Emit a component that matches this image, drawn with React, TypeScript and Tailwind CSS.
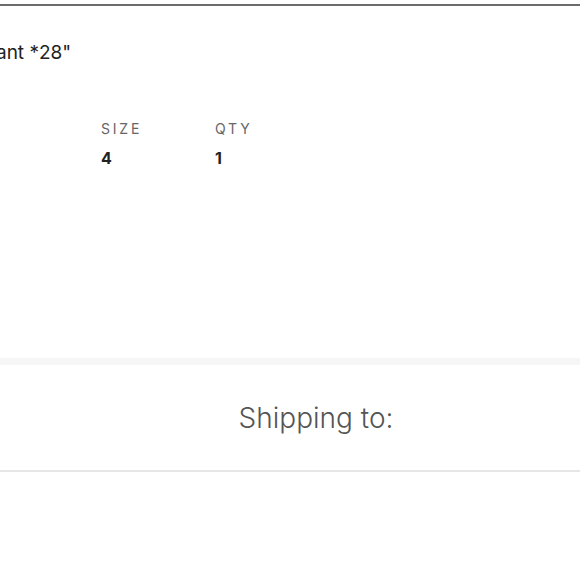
export default function App() {
  return (
    <div className="w-[580px] h-[580px] overflow-hidden bg-white font-['Inter',sans-serif]">
      <div className="h-[4px]" />
      <div className="border-t-2 border-[#6b6b6b]" />
      <div className="h-[352px] flex flex-col">
        <div className="pt-[34px] text-[19px] leading-[25px] text-[#222] whitespace-nowrap -ml-[50px]">
          Pendant *28"
        </div>
        <div className="flex pl-[101px] pt-[55px]">
          <div className="w-[114px] flex flex-col">
            <span className="text-[14px] tracking-[0.2em] text-[#666] leading-[18px]">SIZE</span>
            <span className="text-[16px] font-bold text-[#222] mt-[9px] leading-[22px]">4</span>
          </div>
          <div className="flex flex-col">
            <span className="text-[14px] tracking-[0.2em] text-[#666] leading-[18px]">QTY</span>
            <span className="text-[16px] font-bold text-[#222] mt-[9px] leading-[22px]">1</span>
          </div>
        </div>
      </div>
      <div className="h-[7px] bg-[#f6f6f6]" />
      <div className="h-[105px] flex items-center justify-center pl-[52px]">
        <span className="text-[28px] font-light text-[#555]">Shipping to:</span>
      </div>
      <div className="border-t-2 border-[#e6e6e6]" />
    </div>
  );
}
